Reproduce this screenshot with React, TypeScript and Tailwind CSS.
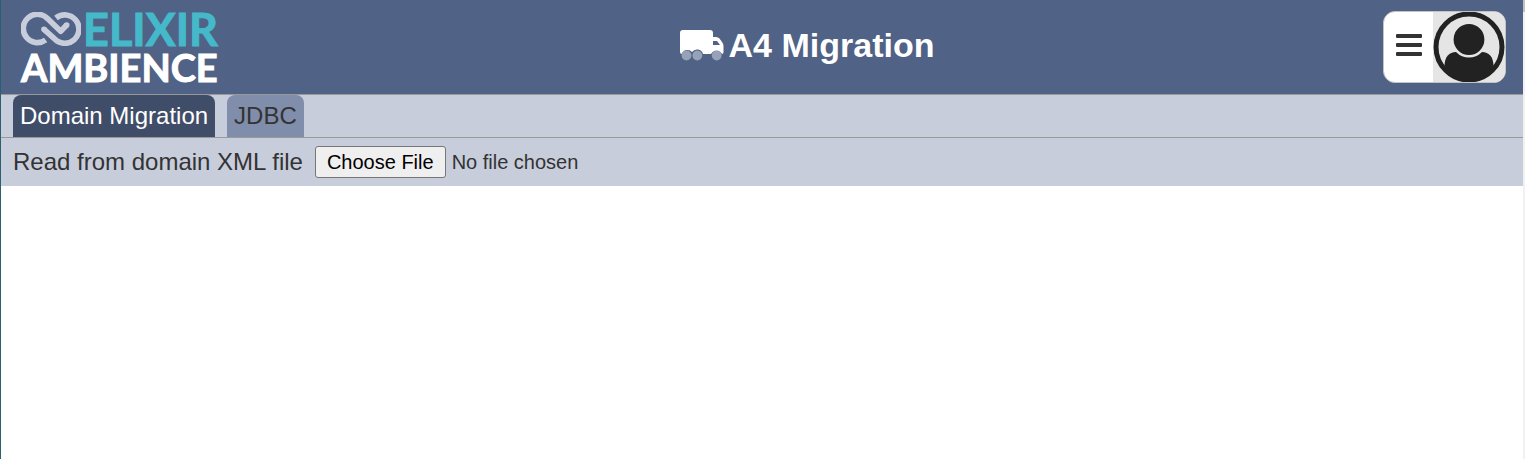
import { useState } from "react";
import { clsx } from "clsx";

const TABS = [
  { id: "domain", label: "Domain Migration" },
  { id: "jdbc", label: "JDBC" },
] as const;

type TabId = (typeof TABS)[number]["id"];

function Logo() {
  return (
    <a
      href="#home"
      className="block w-[210px] pt-1 font-['Lato',sans-serif] font-bold [-webkit-text-stroke:1px_currentColor]"
    >
      <span className="flex items-center gap-0.5 h-9">
        <svg
          viewBox="0 0 180 102"
          className="w-[60px] h-[34px] shrink-0"
          fill="none"
          stroke="#c7cddb"
          strokeWidth="17"
          strokeLinejoin="round"
          aria-hidden="true"
        >
          <path d="M74 84A42.500 42.500 0 1 1 81 21L119 58L137 39" />
          <path d="M105 18A42.500 42.500 0 1 1 100 80L69 52" />
          <circle cx="137" cy="39" r="8.500" fill="#c7cddb" stroke="none" />
          <circle cx="69" cy="52" r="8.500" fill="#c7cddb" stroke="none" />
        </svg>
        <span className="text-[45px] leading-9 text-[#45b9c9]">ELIXIR</span>
      </span>
      <span className="block text-[38px] leading-10 text-white">AMBIENCE</span>
    </a>
  );
}

function TruckIcon() {
  return (
    <svg viewBox="0 0 44 31" className="w-11 h-[31px]" aria-hidden="true">
      <path
        fill="#fff"
        fillRule="evenodd"
        d="M3 0H30Q33 0 33 3V7H36Q38 7 39.500 8.500L42 12Q43.500 14 43.500 16V22Q43.500 24 42 24A6.200 6.200 0 0 0 31 24H23A6.200 6.200 0 0 0 12 22A6.200 6.200 0 0 0 1.500 24Q0 24 0 21V3Q0 0 3 0ZM33 11V15H40L37 11Z"
      />
      <g fill="#97a1b8">
        <circle cx="6.500" cy="25.500" r="4.900" />
        <circle cx="17.300" cy="25.500" r="4.900" />
        <circle cx="36.700" cy="25.500" r="4.900" />
      </g>
    </svg>
  );
}

function Avatar() {
  return (
    <svg viewBox="0 0 72 70" className="w-[72px] h-[70px]" aria-hidden="true">
      <rect width="72" height="70" fill="#e5e5e5" />
      <circle cx="36" cy="35" r="33" fill="none" stroke="#222" strokeWidth="5" />
      <path
        fill="#222"
        d="M11.500 53C12 45 16 40 23 40H49C56 40 60 45 60.500 53L58 59Q50 68 36 68Q22 68 14 59Z"
      />
      <circle
        cx="36"
        cy="27.500"
        r="16.700"
        fill="#222"
        stroke="#e5e5e5"
        strokeWidth="2.600"
      />
    </svg>
  );
}

export default function App() {
  const [tab, setTab] = useState<TabId>("domain");

  return (
    <div className="flex min-h-screen bg-white border-l border-[#2a6070] font-['Liberation_Sans',Arial,sans-serif] text-[#333]">
      <div className="flex-1 min-w-0">
        <header className="flex items-center justify-between h-[95px] pl-5 pr-[17px] bg-[#506285] border-b border-[#999]">
          <Logo />
          <h1 className="flex items-center gap-[5px] pb-1 text-[34px] leading-10 font-bold text-white">
            <TruckIcon />
            A4 Migration
          </h1>
          <div className="flex overflow-hidden rounded-xl border border-[#c4c4c4] bg-white">
            <button
              type="button"
              aria-label="Menu"
              className="flex items-center justify-center w-[49px] pb-1"
            >
              <svg viewBox="0 0 26 22" className="w-[26px] h-[22px]" aria-hidden="true">
                <g fill="#333">
                  <rect width="26" height="4" rx="1" />
                  <rect y="9" width="26" height="4" rx="1" />
                  <rect y="18" width="26" height="4" rx="1" />
                </g>
              </svg>
            </button>
            <button type="button" aria-label="Account">
              <Avatar />
            </button>
          </div>
        </header>

        <nav
          role="tablist"
          className="flex gap-3 px-3 bg-[#c7cddb] border-b border-[#999]"
        >
          {TABS.map((t) => (
            <button
              key={t.id}
              type="button"
              role="tab"
              aria-selected={tab === t.id}
              onClick={() => setTab(t.id)}
              className={clsx(
                "h-[42px] px-[7px] rounded-t-lg text-2xl",
                tab === t.id
                  ? "bg-[#404d68] text-white"
                  : "bg-[#808eac] text-[#333]",
              )}
            >
              {t.label}
            </button>
          ))}
        </nav>

        <div className="flex items-center gap-3 h-12 px-3 bg-[#c7cddb]">
          <label htmlFor="domain-xml" className="text-2xl">
            Read from domain XML file
          </label>
          <input
            id="domain-xml"
            type="file"
            className="text-xl leading-6 file:h-8 file:px-[11px] file:mr-1.5 file:rounded-[3px] file:border file:border-solid file:border-[#767676] file:bg-[#efefef] file:text-black"
          />
        </div>
      </div>

      <div className="w-0.5 bg-[#f1f1f1]">
        <div className="h-3 bg-[#c1c1c1]" />
      </div>
    </div>
  );
}
